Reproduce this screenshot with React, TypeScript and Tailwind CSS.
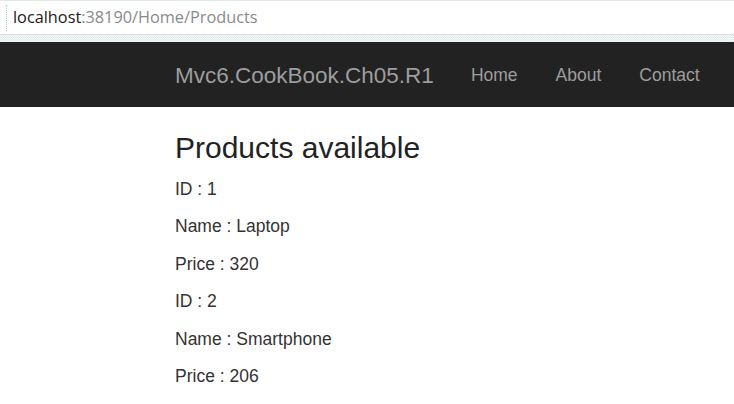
import React from 'react';

const products = [
  { id: 1, name: 'Laptop', price: 320 },
  { id: 2, name: 'Smartphone', price: 206 },
];

const navLinks = ['Home', 'About', 'Contact'];

export default function App() {
  return (
    <div className="w-[734px] h-[404px] overflow-hidden bg-white">
      {/* Address bar */}
      <div className="border-t border-[#dfe9ea] h-[34px] flex items-center">
        <div className="ml-[6px] h-[26px] border-l border-dotted border-[#b9c9ce]" />
        <div className="ml-[6px] text-[16.3px] leading-none" style={{ fontFamily: '"Open Sans", "Noto Sans", sans-serif' }}>
          <span className="text-[#1a1a1a]">localhost</span>
          <span className="text-[#8a8a8a]">:38190/Home/Products</span>
        </div>
      </div>
      <div className="h-[8px] bg-[repeating-conic-gradient(#e2ebee_0%_25%,#f6f9fa_0%_50%)] bg-[length:2px_2px] border-t border-[#d6e3e6]" />

      {/* Navbar */}
      <nav className="bg-[#222222] h-[65px] flex items-center pl-[175px] pt-[2px]" style={{ fontFamily: '"Liberation Sans", Arial, sans-serif' }}>
        <span className="text-[22.5px] text-[#9d9d9d] mr-[18px]">Mvc6.CookBook.Ch05.R1</span>
        <ul className="flex">
          {navLinks.map((link) => (
            <li key={link} className="px-[19px] text-[17.5px] text-[#9d9d9d]">
              {link}
            </li>
          ))}
        </ul>
      </nav>

      {/* Body */}
      <main className="pl-[175px] text-[#333333]" style={{ fontFamily: '"Liberation Sans", Arial, sans-serif' }}>
        <h3 className="mt-[24px] mb-[12.5px] text-[30px] leading-[33px] text-[#222222]">Products available</h3>
        {products.map((p) => (
          <div key={p.id}>
            <p className="text-[17.5px] leading-[25px] mb-[12.5px]">ID : {p.id}</p>
            <p className="text-[17.5px] leading-[25px] mb-[12.5px]">Name : {p.name}</p>
            <p className="text-[17.5px] leading-[25px] mb-[12.5px]">Price : {p.price}</p>
          </div>
        ))}
      </main>
    </div>
  );
}
